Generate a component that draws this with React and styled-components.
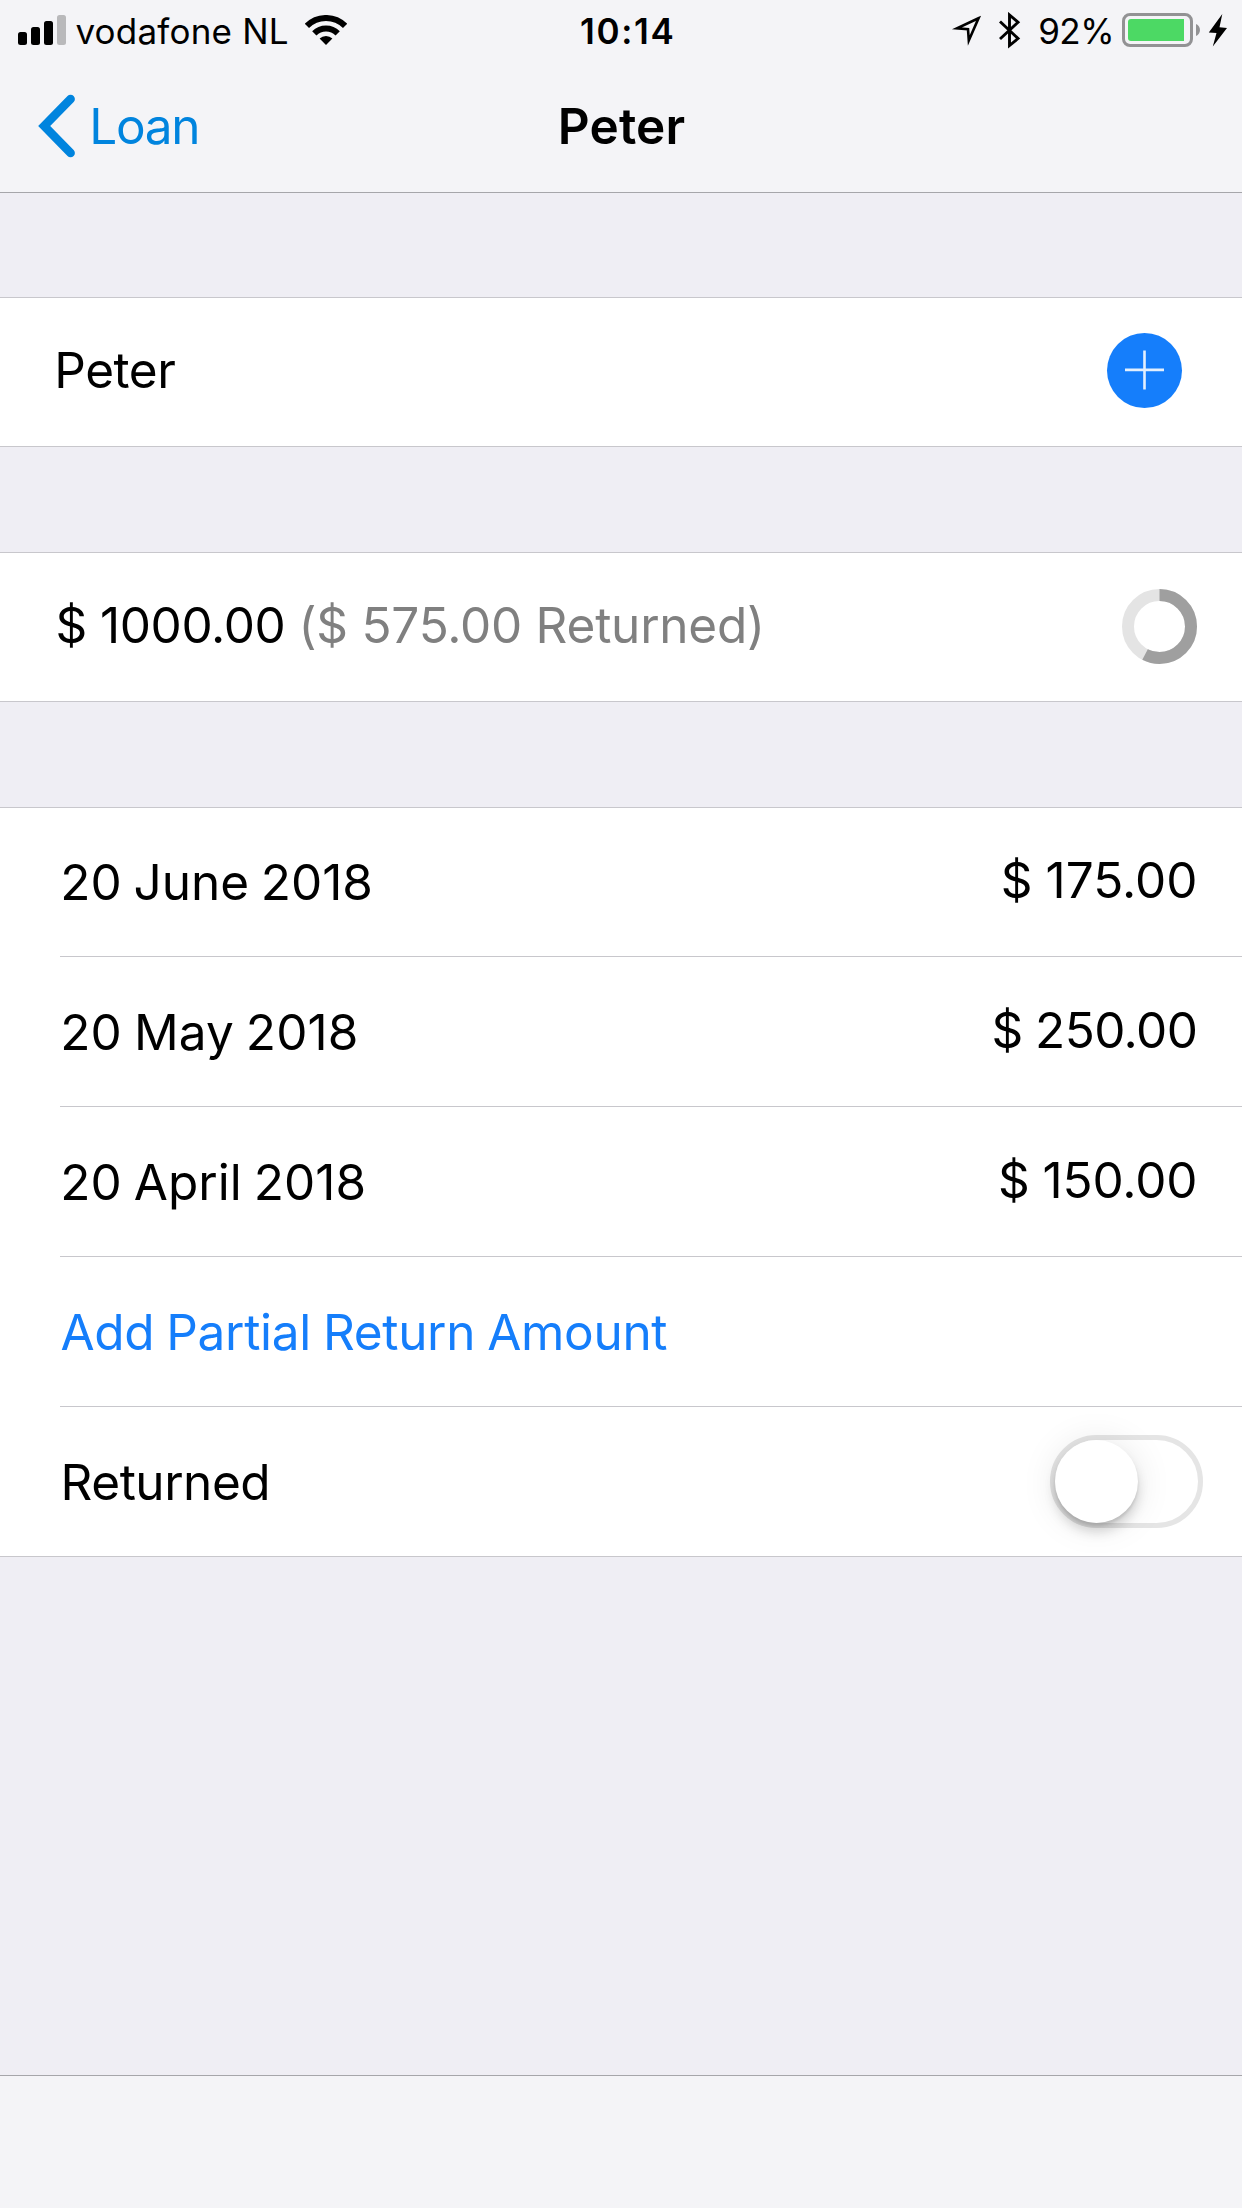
import { useState } from "react"
import styled, { createGlobalStyle } from "styled-components"

const GlobalStyle = createGlobalStyle`
    * {
        box-sizing: border-box;
    }
    body {
        margin: 0;
        background: #efeef4;
        font-family: Inter, "Liberation Sans", sans-serif;
        color: #000;
    }
`

const Screen = styled.div`
    display: flex;
    flex-direction: column;
    width: 1242px;
    height: 2208px;
    overflow: hidden;
    background: #efeef4;
`

const Header = styled.header`
    height: 193px;
    background: #f4f4f7;
    border-bottom: 1px solid #a6a6aa;
`

const StatusBar = styled.div`
    display: grid;
    grid-template-columns: 580px 1fr auto;
    height: 60px;
    padding-right: 14px;
    font-size: 35px;
    line-height: 62px;
`

const StatusGroup = styled.div`
    display: flex;
    align-items: flex-start;
`

const StatusIcon = styled.svg`
    display: block;
    flex: none;
    margin-top: ${(props) => props.$top}px;
    margin-left: ${(props) => props.$left}px;
`

const Carrier = styled.span`
    margin-left: 9.4px;
    letter-spacing: 0.22px;
`

const Clock = styled.span`
    font-weight: 600;
    letter-spacing: 1.69px;
`

const Percent = styled.span`
    margin-left: 17px;
    letter-spacing: -0.52px;
`

const NavBar = styled.nav`
    display: grid;
    grid-template-columns: 557.8px 1fr;
    height: 132px;
    font-size: 49.5px;
    line-height: 132px;
`

const BackButton = styled.a`
    display: flex;
    align-items: center;
    padding-left: 38px;
    color: #0084de;
    letter-spacing: -1.3px;
    cursor: pointer;
`

const Chevron = styled.svg`
    display: block;
    margin-right: 12.3px;
`

const Title = styled.h1`
    margin: 0;
    font-size: 49.5px;
    font-weight: 600;
    letter-spacing: 0.15px;
`

const Section = styled.section`
    margin-top: 104px;
    background: #fff;
    border-top: 1px solid #c8c7cc;
    border-bottom: 1px solid #c8c7cc;

    & + & {
        margin-top: 105px;
    }
`

const Row = styled.div`
    display: flex;
    justify-content: space-between;
    height: 148px;
    margin-left: ${(props) => (props.$inset ? 60 : 0)}px;
    padding-left: ${(props) => props.$pad || 0}px;
    padding-right: ${(props) => props.$right || 45}px;
    font-size: 49.5px;
    line-height: 148px;
    white-space: pre;

    & + & {
        height: 150px;
        padding-top: 1px;
        border-top: 1px solid #c8c7cc;
    }
`

const Label = styled.span`
    color: ${(props) => props.$color || "#000"};
    line-height: ${(props) => (props.$raised ? 144 : 148)}px;
    letter-spacing: ${(props) => props.$spacing || 0}px;
    word-spacing: ${(props) => props.$words || 0}px;
`

const AddButton = styled.button`
    display: block;
    width: 75px;
    height: 75px;
    margin-top: 35px;
    padding: 0;
    border: 0;
    border-radius: 50%;
    background: #157efb;
    cursor: pointer;

    svg {
        display: block;
    }
`

const Ring = styled.svg`
    display: block;
    margin-top: 36px;
`

const Track = styled.button`
    width: 153px;
    height: 93px;
    margin-top: 27px;
    padding: 0;
    border: 5px solid #e5e5e5;
    border-radius: 47px;
    background: #fff;
    cursor: pointer;
`

const Knob = styled.span`
    display: block;
    width: 83px;
    height: 83px;
    margin-left: ${(props) => (props.$on ? 60 : 0)}px;
    border-radius: 50%;
    background: #fff;
    box-shadow: 0 9px 12px rgba(0, 0, 0, 0.15), 0 3px 3px rgba(0, 0, 0, 0.1),
        0 2px 36px rgba(0, 0, 0, 0.1);
`

const Toolbar = styled.footer`
    height: 133px;
    margin-top: auto;
    background: #f4f4f7;
    border-top: 1px solid #a6a6aa;
`

const payments = [
    { date: "20 June 2018", amount: "$ 175.00", dateSpacing: -0.04, amountSpacing: 0 },
    { date: "20 May 2018", amount: "$ 250.00", dateSpacing: 0.1, amountSpacing: -0.56 },
    { date: "20 April 2018", amount: "$ 150.00", dateSpacing: 0.04, amountSpacing: -0.12 },
]

const Signal = () => (
    <StatusIcon $top={15} $left={18} width="48" height="30">
        <rect x="0" y="17" width="9" height="13" rx="2.5" />
        <rect x="13" y="12" width="9" height="18" rx="2.5" />
        <rect x="26" y="6" width="9" height="24" rx="2.5" />
        <rect x="39" y="0" width="9" height="30" rx="2.5" fill="#b9b9bb" />
    </StatusIcon>
)

const Wifi = () => (
    <StatusIcon $top={15} $left={16.6} width="42" height="30">
        <g fill="none" stroke="#000" strokeWidth="6">
            <path d="M1.9 10.9A27 27 0 0 1 40.1 10.9" />
            <path d="M9.3 18.3A16.5 16.5 0 0 1 32.7 18.3" />
        </g>
        <path d="M21 30L14.6 23.6A9 9 0 0 1 27.4 23.6Z" />
    </StatusIcon>
)

const Location = () => (
    <StatusIcon $top={15} $left={0} width="31" height="32">
        <path d="M27.5 3.3L6 13.4L17 14.2L17.8 25.5Z" fill="none" stroke="#000" strokeWidth="2.6" strokeMiterlimit="10" />
    </StatusIcon>
)

const Bluetooth = () => (
    <StatusIcon $top={12} $left={17} width="22" height="38">
        <path d="M1 9.5L19 26.5L10.5 33.5V3L19 10.2L1 27" fill="none" stroke="#000" strokeWidth="2.9" />
    </StatusIcon>
)

const Battery = () => (
    <StatusIcon $top={13} $left={8} width="78" height="34">
        <rect x="1.5" y="1.5" width="68" height="31" rx="6.5" fill="none" stroke="#929294" strokeWidth="3" />
        <path d="M9 6H62V28H9A3 3 0 0 1 6 25V9A3 3 0 0 1 9 6Z" fill="#4cd964" />
        <path d="M74 11C79.3 13 79.3 21 74 23Z" fill="#929294" />
    </StatusIcon>
)

const Bolt = () => (
    <StatusIcon $top={13} $left={8} width="20" height="34">
        <path d="M14.3 1L0.8 19.5L8.5 20L4.8 33.5L19 15L11.5 14.2Z" />
    </StatusIcon>
)

// ring of 12px, filled clockwise from the top
const Progress = ({ value }) => {
    const length = 2 * Math.PI * 31.5

    return (
        <Ring width="75" height="75" fill="none" strokeWidth="12">
            <circle cx="37.5" cy="37.5" r="31.5" stroke="#e4e4e4" />
            <circle
                cx="37.5"
                cy="37.5"
                r="31.5"
                stroke="#9f9f9f"
                strokeDasharray={`${length * value} ${length}`}
                transform="rotate(-90 37.5 37.5)"
            />
        </Ring>
    )
}

const App = () => {
    const [returned, setReturned] = useState(false)

    return (
        <>
            <GlobalStyle />
            <Screen>
                <Header>
                    <StatusBar>
                        <StatusGroup>
                            <Signal />
                            <Carrier>vodafone NL</Carrier>
                            <Wifi />
                        </StatusGroup>
                        <Clock>10:14</Clock>
                        <StatusGroup>
                            <Location />
                            <Bluetooth />
                            <Percent>92%</Percent>
                            <Battery />
                            <Bolt />
                        </StatusGroup>
                    </StatusBar>
                    <NavBar>
                        <BackButton>
                            <Chevron width="39" height="64">
                                <path
                                    d="M32.6 5.1L6.2 32L32.6 58.9"
                                    fill="none"
                                    stroke="#0084de"
                                    strokeWidth="8.6"
                                    strokeLinecap="round"
                                />
                            </Chevron>
                            Loan
                        </BackButton>
                        <Title>Peter</Title>
                    </NavBar>
                </Header>

                <Section>
                    <Row $pad={54.3} $right={60}>
                        <Label $raised $spacing={-0.45}>Peter</Label>
                        <AddButton title="Add">
                            <svg width="75" height="75" stroke="#fff" strokeWidth="2.6" opacity="0.88">
                                <path d="M37.5 17.5V56.5M18 36.9H57" />
                            </svg>
                        </AddButton>
                    </Row>
                </Section>

                <Section>
                    <Row $pad={55.6}>
                        <Label $raised $spacing={-0.38} $words={-0.5}>
                            $ 1000.00 <Label $raised $color="#808080" $spacing={-0.23}>($ 575.00 Returned)</Label>
                        </Label>
                        <Progress value={0.575} />
                    </Row>
                </Section>

                <Section>
                    {payments.map((payment) => (
                        <Row key={payment.date} $inset $pad={0.3} $right={44.6}>
                            <Label $spacing={payment.dateSpacing} $words={-2}>{payment.date}</Label>
                            <Label $raised $spacing={payment.amountSpacing} $words={-1}>{payment.amount}</Label>
                        </Row>
                    ))}
                    <Row $inset $pad={0.4}>
                        <Label $color="#157efb" $spacing={-0.32} $words={-1.5}>Add Partial Return Amount</Label>
                    </Row>
                    <Row $inset $pad={0.6} $right={39}>
                        <Label $spacing={-0.47}>Returned</Label>
                        <Track onClick={() => setReturned(!returned)}>
                            <Knob $on={returned} />
                        </Track>
                    </Row>
                </Section>

                <Toolbar />
            </Screen>
        </>
    )
}

export default App
